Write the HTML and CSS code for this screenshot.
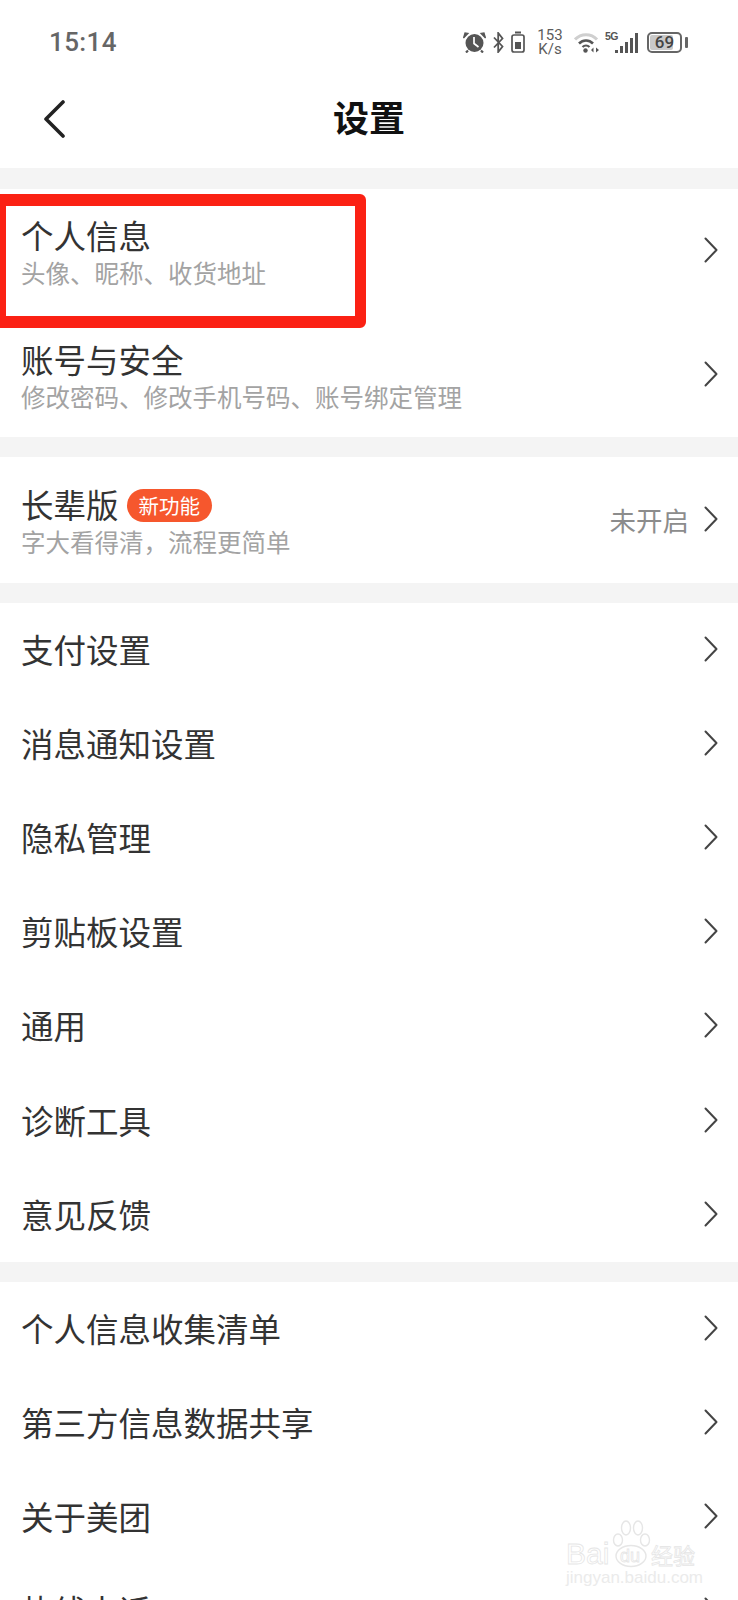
FILE: index.html
```html
<!DOCTYPE html>
<html lang="zh-CN">
<head>
  <meta charset="UTF-8">
  <title>设置</title>
  <link rel="stylesheet" href="styles.css">
</head>
<body>
  <svg class="defs" width="0" height="0">
    <symbol id="chev" viewBox="0 0 14 26">
      <path d="M1.5 1.5 L12.5 13 L1.5 24.5" fill="none" stroke="#444" stroke-width="2" stroke-linecap="round" stroke-linejoin="round"/>
    </symbol>
  </svg>

  <div class="status-bar">
    <span class="time">15:14</span>
    <div class="status-icons">
      <svg class="ic-alarm" width="23" height="21" viewBox="0 0 23 21">
        <circle cx="11.5" cy="11" r="9" fill="#555"/>
        <path d="M11 5 V11.5 L15.5 15" fill="none" stroke="#fff" stroke-width="1.7"/>
        <path d="M0.5 6 L5 1.5 L2 1 Z M22.5 6 L18 1.5 L21 1 Z" fill="#555" stroke="#555" stroke-width="1.2"/>
        <path d="M5 18.5 L3 20.5 M18 18.5 L20 20.5" stroke="#555" stroke-width="2.2"/>
      </svg>
      <svg class="ic-bt" width="11" height="21" viewBox="0 0 11 21">
        <path d="M1 5.5 L9.5 14.5 L5.2 20 V1 L9.5 6.5 L1 15.5" fill="none" stroke="#555" stroke-width="1.8"/>
      </svg>
      <svg class="ic-cell" width="14" height="22" viewBox="0 0 14 22">
        <rect x="4" y="0.5" width="6" height="2" fill="#555"/>
        <rect x="1" y="4" width="12" height="17" rx="2" fill="none" stroke="#555" stroke-width="1.7"/>
        <rect x="4" y="11" width="6" height="7" fill="#555"/>
      </svg>
      <div class="speed"><span>153</span><span>K/s</span></div>
      <svg class="ic-wifi" width="25" height="21" viewBox="0 0 25 21">
        <path d="M1 7.5 C7 1 17 1 23 7.5" fill="none" stroke="#cfcfcf" stroke-width="3"/>
        <path d="M5 11.5 C9 7.5 15 7.5 19 11.5" fill="none" stroke="#555" stroke-width="2.6"/>
        <path d="M8.5 15 C10.5 13 13.5 13 15.5 15" fill="none" stroke="#555" stroke-width="2.2"/>
        <circle cx="11.5" cy="18.5" r="2.2" fill="#555"/>
        <path d="M17 18 L19.5 15.5 V20.5 Z M25 18 L22 15.5 V20.5 Z" fill="#555"/>
      </svg>
      <div class="net">
        <span class="five-g">5G</span>
        <div class="bars">
          <i class="b1"></i><i class="b2"></i><i class="b3"></i><i class="b4"></i><i class="b5"></i>
        </div>
      </div>
      <div class="battery">
        <div class="batt-body"><div class="batt-fill"></div><span>69</span></div>
        <div class="batt-nub"></div>
      </div>
    </div>
  </div>

  <div class="nav">
    <svg class="back" width="22" height="38" viewBox="0 0 22 38">
      <path d="M20 2 L3 19 L20 36" fill="none" stroke="#222" stroke-width="3.6" stroke-linecap="round" stroke-linejoin="round"/>
    </svg>
    <h1>设置</h1>
  </div>

  <div class="gap gap-first"></div>
  <div class="group">
    <div class="row row-sub">
      <div class="row-text"><div class="title">个人信息</div><div class="sub">头像、昵称、收货地址</div></div>
      <svg class="chev"><use href="#chev"/></svg>
    </div>
    <div class="row row-sub">
      <div class="row-text"><div class="title">账号与安全</div><div class="sub">修改密码、修改手机号码、账号绑定管理</div></div>
      <svg class="chev"><use href="#chev"/></svg>
    </div>
    <div class="highlight"></div>
  </div>

  <div class="gap"></div>
  <div class="group">
    <div class="row row-elder">
      <div class="row-text">
        <div class="title">长辈版<span class="badge">新功能</span></div>
        <div class="sub">字大看得清，流程更简单</div>
      </div>
      <span class="value">未开启</span>
      <svg class="chev"><use href="#chev"/></svg>
    </div>
  </div>

  <div class="gap"></div>
  <div class="group">
    <div class="row"><div class="title">支付设置</div><svg class="chev"><use href="#chev"/></svg></div>
    <div class="row"><div class="title">消息通知设置</div><svg class="chev"><use href="#chev"/></svg></div>
    <div class="row"><div class="title">隐私管理</div><svg class="chev"><use href="#chev"/></svg></div>
    <div class="row"><div class="title">剪贴板设置</div><svg class="chev"><use href="#chev"/></svg></div>
    <div class="row"><div class="title">通用</div><svg class="chev"><use href="#chev"/></svg></div>
    <div class="row"><div class="title">诊断工具</div><svg class="chev"><use href="#chev"/></svg></div>
    <div class="row"><div class="title">意见反馈</div><svg class="chev"><use href="#chev"/></svg></div>
  </div>

  <div class="gap"></div>
  <div class="group">
    <div class="row"><div class="title">个人信息收集清单</div><svg class="chev"><use href="#chev"/></svg></div>
    <div class="row"><div class="title">第三方信息数据共享</div><svg class="chev"><use href="#chev"/></svg></div>
    <div class="row"><div class="title">关于美团</div><svg class="chev"><use href="#chev"/></svg></div>
    <div class="row"><div class="title">热线电话</div><svg class="chev"><use href="#chev"/></svg></div>
  </div>

  <div class="watermark">
    <svg class="paw" width="40" height="48" viewBox="0 0 40 48">
      <g fill="#fff" stroke="#e6e6e6" stroke-width="1.4">
        <ellipse cx="7" cy="20" rx="4.5" ry="6"/>
        <ellipse cx="15" cy="8" rx="4.5" ry="7"/>
        <ellipse cx="27" cy="8" rx="4.5" ry="7"/>
        <ellipse cx="34" cy="20" rx="4.5" ry="6"/>
        <ellipse cx="20" cy="36" rx="15" ry="10.5"/>
      </g>
    </svg>
    <span class="wm-bai">Bai</span>
    <span class="wm-du">du</span>
    <span class="wm-cn">经验</span>
    <div class="wm-url">jingyan.baidu.com</div>
  </div>
</body>
</html>
```

FILE: styles.css
```css
* {
  box-sizing: border-box;
}
html,
body {
  margin: 0;
  height: 1600px;
  overflow: hidden;
}
body {
  position: relative;
  background: #fff;
  color: #333;
  font-family: "Noto Sans CJK SC", "Noto Sans", sans-serif;
}
.defs {
  position: absolute;
}

/* status bar */
.status-bar {
  height: 70px;
  padding: 14px 0 0 49px;
  display: flex;
  align-items: center;
  justify-content: space-between;
}
.time {
  font-family: Roboto, sans-serif;
  font-size: 26px;
  font-weight: 500;
  letter-spacing: 0.4px;
  color: #666;
}
.status-icons {
  display: flex;
  align-items: center;
  padding-right: 50px;
}
.ic-alarm {
  margin-right: 7px;
}
.ic-bt {
  margin-right: 7px;
}
.ic-cell {
  margin-right: 12px;
}
.speed {
  display: flex;
  flex-direction: column;
  align-items: center;
  width: 26px;
  margin-right: 11px;
  font-family: Roboto, sans-serif;
  font-size: 15px;
  line-height: 14px;
  color: #5c5c5c;
}
.ic-wifi {
  margin-right: 6px;
}
.net {
  position: relative;
  width: 33px;
  height: 21px;
  margin-right: 9px;
}
.five-g {
  position: absolute;
  left: 0;
  top: -1px;
  font-family: "Liberation Sans", sans-serif;
  font-size: 10.5px;
  font-weight: 700;
  line-height: 10px;
  letter-spacing: -0.5px;
  color: #555;
}
.bars {
  position: absolute;
  right: 0;
  bottom: 0;
  display: flex;
  align-items: flex-end;
  gap: 2px;
}
.bars i {
  display: block;
  width: 3px;
  background: #555;
}
.bars .b1 { height: 3px; }
.bars .b2 { height: 7px; }
.bars .b3 { height: 11px; }
.bars .b4 { height: 15px; }
.bars .b5 { height: 20px; }
.battery {
  display: flex;
  align-items: center;
  gap: 3px;
}
.batt-body {
  position: relative;
  width: 35px;
  height: 21px;
  border: 2px solid #666;
  border-radius: 5px;
  display: flex;
  align-items: center;
  justify-content: center;
}
.batt-fill {
  position: absolute;
  left: 1px;
  top: 1px;
  bottom: 1px;
  width: 23px;
  background: #c9c9c9;
  border-radius: 2px;
}
.batt-body span {
  position: relative;
  font-family: Roboto, sans-serif;
  font-size: 17px;
  font-weight: 500;
  color: #444;
}
.batt-nub {
  width: 3px;
  height: 11px;
  background: #666;
  border-radius: 1px;
}

/* nav */
.nav {
  position: relative;
  height: 98px;
  padding-bottom: 6px;
  display: flex;
  align-items: center;
  justify-content: center;
}
.back {
  position: absolute;
  left: 43px;
  top: 30px;
}
.nav h1 {
  margin: 0;
  font-size: 36px;
  font-weight: 700;
  color: #111;
}

/* list */
.gap {
  height: 20px;
  background: #f4f4f4;
}
.gap-first {
  height: 21px;
}
.group {
  position: relative;
  background: #fff;
}
.row {
  height: 94.1px;
  padding: 0 20px 2px 21px;
  display: flex;
  align-items: center;
}
.row-sub {
  height: 124px;
}
.row-elder {
  height: 126px;
}
.row-text {
  flex: 1;
  margin-top: 2px;
}
.title {
  flex: 1;
  font-size: 32.5px;
  line-height: 44px;
  color: #333;
  white-space: nowrap;
}
.sub {
  font-size: 24.5px;
  line-height: 32px;
  color: #a3a3a3;
}
.value {
  font-size: 26.5px;
  color: #8c8c8c;
  margin-right: 15px;
}
.chev {
  width: 14px;
  height: 26px;
  flex: none;
}
.badge {
  display: inline-block;
  height: 33px;
  margin-left: 8px;
  padding: 0 12px;
  border-radius: 17px;
  background: #f6572d;
  color: #fff;
  font-size: 20.5px;
  line-height: 33px;
  vertical-align: 4px;
}

/* annotation drawn over the screenshot */
.highlight {
  position: absolute;
  left: -6px;
  top: 5px;
  width: 372px;
  height: 134px;
  border: 12px solid #fb2114;
  border-right-width: 11px;
  border-radius: 6px;
}

/* watermark */
.watermark {
  position: absolute;
  left: 566px;
  top: 1520px;
  width: 134px;
  height: 64px;
}
.paw {
  position: absolute;
  left: 45px;
  top: 0;
}
.wm-bai,
.wm-du,
.wm-cn {
  position: absolute;
  color: #fff;
  -webkit-text-stroke: 0.8px #e6e6e6;
}
.wm-bai {
  left: 0;
  top: 18px;
  font-family: "Liberation Sans", sans-serif;
  font-size: 30px;
  line-height: 32px;
}
.wm-du {
  left: 54px;
  top: 26px;
  font-family: "Liberation Sans", sans-serif;
  font-size: 18px;
  line-height: 20px;
}
.wm-cn {
  left: 85px;
  top: 20px;
  font-size: 22px;
  line-height: 28px;
}
.wm-url {
  position: absolute;
  left: 0;
  top: 49px;
  font-family: "Liberation Sans", sans-serif;
  font-size: 17px;
  line-height: 18px;
  color: #ebebeb;
}
```
